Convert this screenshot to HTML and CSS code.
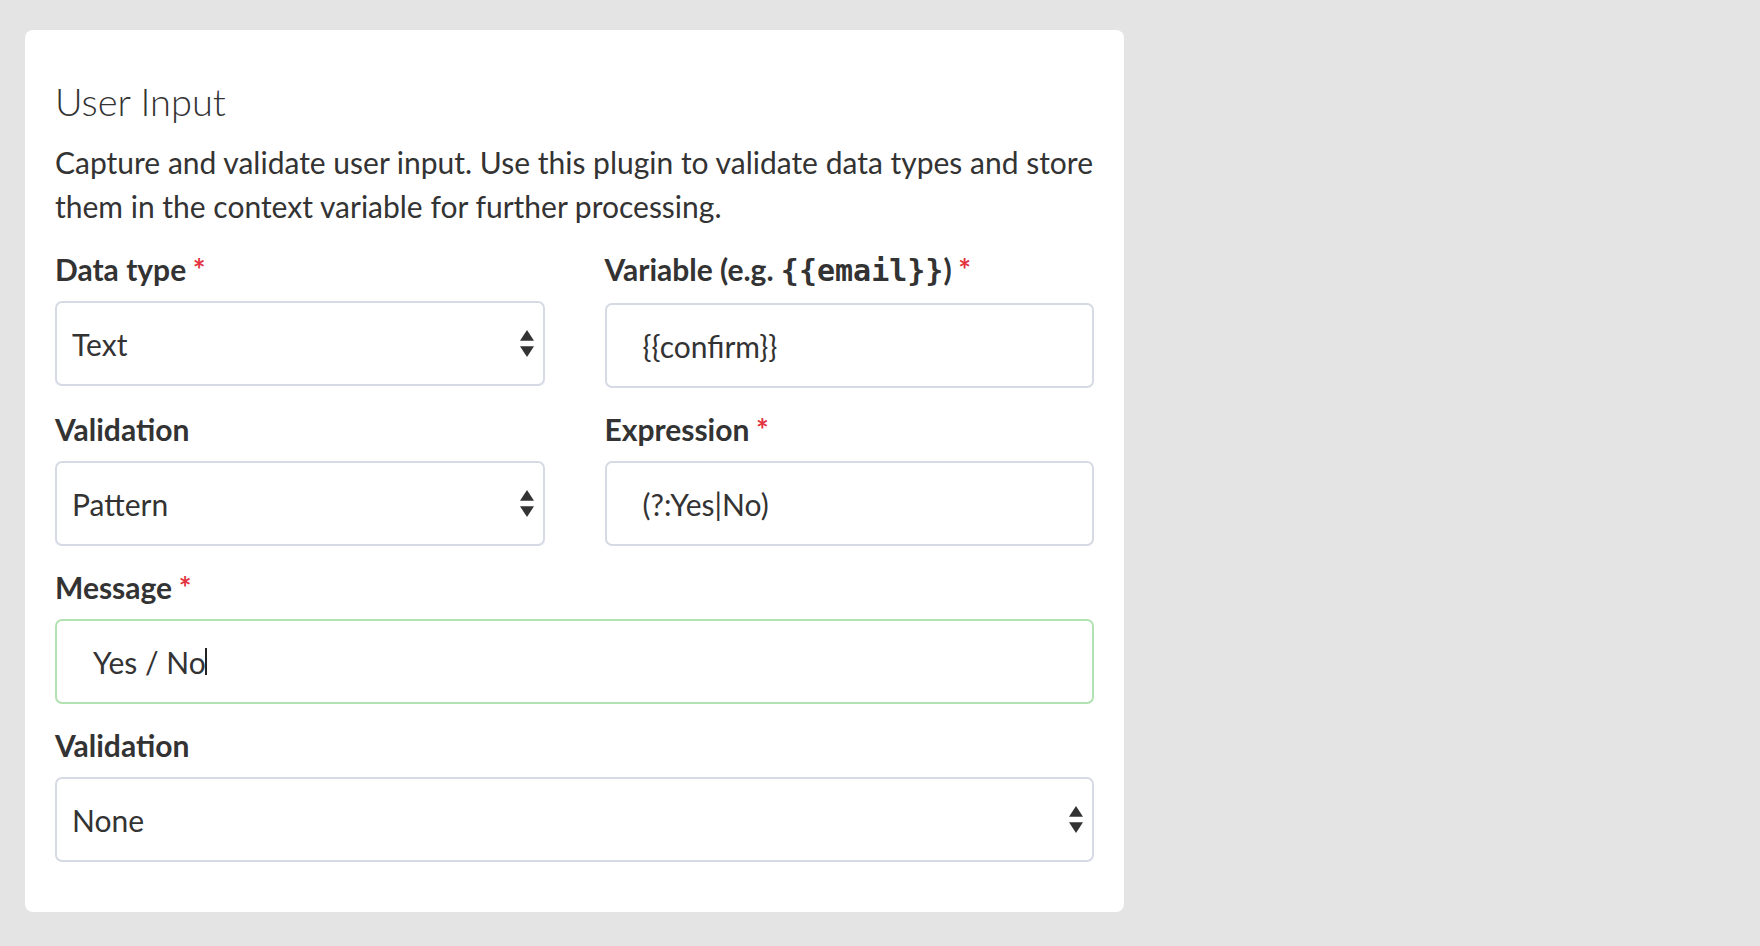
FILE: index.html
```html
<!DOCTYPE html>
<html lang="en">
<head>
<meta charset="utf-8">
<title>User Input</title>
<link rel="stylesheet" href="styles.css">
</head>
<body>
<div class="page">
  <div class="card">
    <h2 class="title">User Input</h2>
    <p class="desc">Capture and validate user input. Use this plugin to validate data types and store them in the context variable for further processing.</p>
    <div class="grid">
      <div class="field required">
        <label class="label">Data type</label>
        <div class="control select">
          <span class="value">Text</span>
          <svg class="arrows" width="14" height="27" viewBox="0 0 14 27"><polygon points="7,0 14,10.7 0,10.7"/><polygon points="0,16.3 14,16.3 7,27"/></svg>
        </div>
      </div>
      <div class="field required">
        <label class="label">Variable (e.g. <code class="code">{{email}}</code>)</label>
        <div class="control input"><span class="value">{{confirm}}</span></div>
      </div>
      <div class="field">
        <label class="label">Validation</label>
        <div class="control select">
          <span class="value">Pattern</span>
          <svg class="arrows" width="14" height="27" viewBox="0 0 14 27"><polygon points="7,0 14,10.7 0,10.7"/><polygon points="0,16.3 14,16.3 7,27"/></svg>
        </div>
      </div>
      <div class="field required">
        <label class="label">Expression</label>
        <div class="control input"><span class="value">(?:Yes|No)</span></div>
      </div>
      <div class="field wide required">
        <label class="label">Message</label>
        <div class="control input focused"><span class="value">Yes / No</span><span class="caret"></span></div>
      </div>
      <div class="field wide">
        <label class="label">Validation</label>
        <div class="control select">
          <span class="value">None</span>
          <svg class="arrows" width="14" height="27" viewBox="0 0 14 27"><polygon points="7,0 14,10.7 0,10.7"/><polygon points="0,16.3 14,16.3 7,27"/></svg>
        </div>
      </div>
    </div>
  </div>
</div>
</body>
</html>
```

FILE: styles.css
```css
html, body {
  margin: 0;
  padding: 0;
}

body {
  background: #e4e4e4;
  font-family: Lato, "Open Sans", "Liberation Sans", sans-serif;
  color: #333333;
}

.page {
  padding: 30px 0 30px 25px;
}

.card {
  width: 1099px;
  box-sizing: border-box;
  background: #ffffff;
  border-radius: 8px;
  padding: 48px 30px 50px 30px;
}

.title {
  margin: 0;
  font-size: 38px;
  line-height: 46px;
  font-weight: 300;
  color: #333333;
}

.desc {
  margin: 16px 0 24px 0;
  font-size: 30px;
  line-height: 44px;
  color: #333333;
}

.grid {
  display: grid;
  grid-template-columns: 1fr 1fr;
  column-gap: 60px;
  row-gap: 24px;
}

.field.wide {
  grid-column: 1 / -1;
}

.label {
  display: block;
  font-size: 30px;
  line-height: 34px;
  font-weight: 700;
  color: #333333;
  margin-bottom: 15px;
}

.required .label::after {
  content: "*";
  color: #e3343f;
  font-weight: 700;
  margin-left: 0.22em;
}

.code {
  font-family: "DejaVu Sans Mono", "Liberation Mono", monospace;
  font-weight: 700;
  font-size: 30px;
  line-height: 34px;
}

.control {
  height: 85px;
  box-sizing: border-box;
  border: 2px solid #d6dae4;
  border-radius: 7px;
  font-size: 30px;
  color: #333333;
  display: flex;
  align-items: center;
  background: #ffffff;
}

.select {
  padding: 0 9px 0 15px;
  justify-content: space-between;
}

.input {
  padding-left: 36px;
}

.input.focused {
  border-color: #b2e2b2;
}

.arrows {
  display: block;
  fill: #333333;
}

.caret {
  display: inline-block;
  width: 2px;
  height: 27px;
  background: #222222;
  margin-left: -1px;
}
```
